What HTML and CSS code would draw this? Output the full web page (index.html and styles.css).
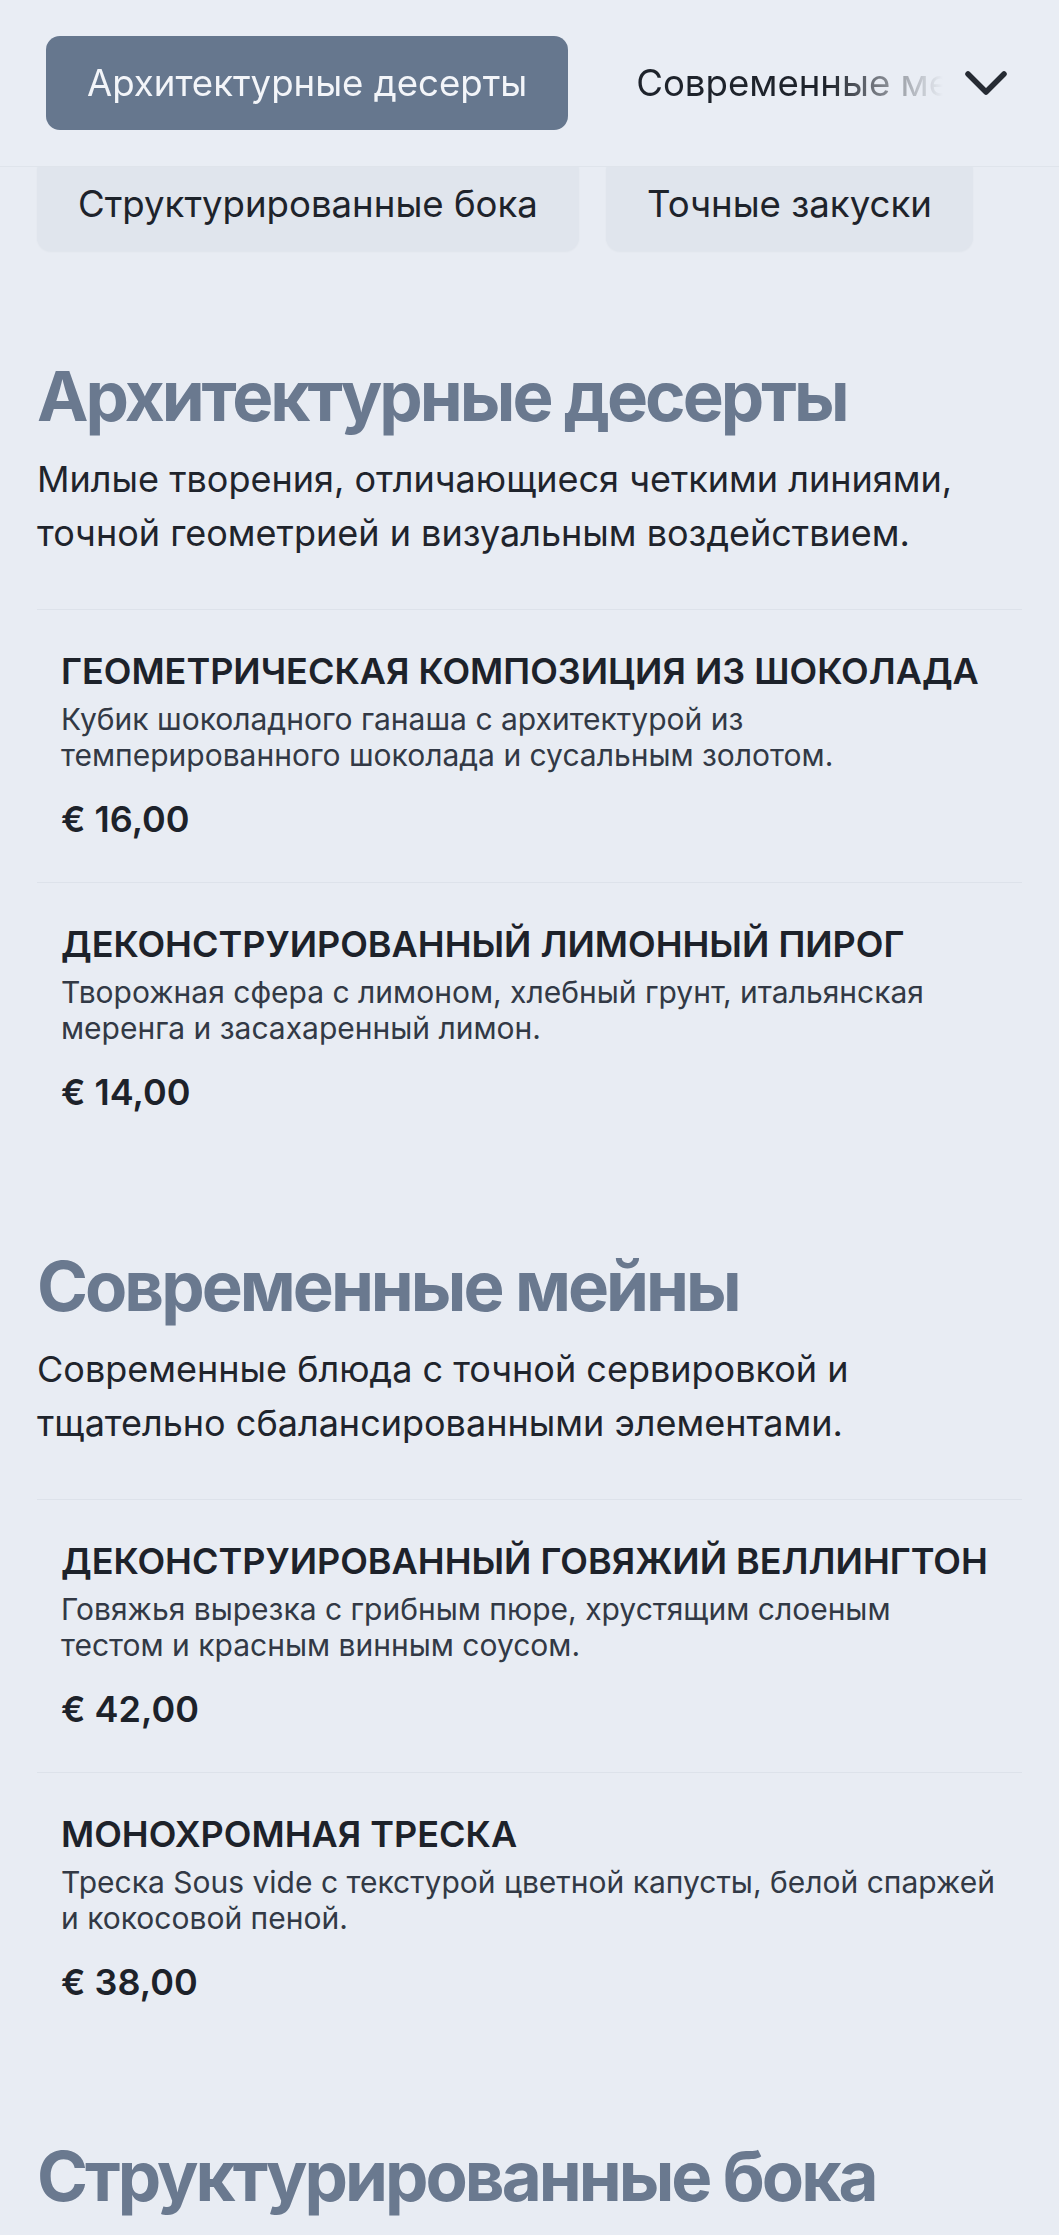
FILE: index.html
```html
<!DOCTYPE html>
<html lang="ru">
<head>
<meta charset="utf-8">
<title>Меню</title>
<link rel="stylesheet" href="styles.css">
</head>
<body>
<header class="topbar">
  <nav class="tabs">
    <a class="tab tab-active" href="#desserts">Архитектурные десерты</a>
    <a class="tab" href="#mains">Современные мейны</a>
    <a class="tab" href="#sides">Структурированные бока</a>
    <a class="tab" href="#starters">Точные закуски</a>
  </nav>
  <button class="toggle" type="button" aria-label="Показать все категории">
    <svg class="chevron" viewBox="0 0 46 28" width="46" height="28"><polyline points="5,5 23,23 41,5" fill="none" stroke="#262b33" stroke-width="5.5" stroke-linecap="round" stroke-linejoin="round"/></svg>
  </button>
</header>
<div class="chips">
  <a class="chip" href="#sides">Структурированные бока</a>
  <a class="chip" href="#starters">Точные закуски</a>
</div>
<main class="menu">
  <section class="category" id="desserts">
    <div class="category-head">
      <h2 class="category-title">Архитектурные десерты</h2>
      <p class="category-desc">Милые творения, отличающиеся четкими линиями, точной геометрией и визуальным воздействием.</p>
    </div>
    <article class="dish">
      <h3 class="dish-name">Геометрическая композиция из шоколада</h3>
      <p class="dish-desc">Кубик шоколадного ганаша с архитектурой из темперированного шоколада и сусальным золотом.</p>
      <p class="dish-price">€ 16,00</p>
    </article>
    <article class="dish">
      <h3 class="dish-name">Деконструированный лимонный пирог</h3>
      <p class="dish-desc">Творожная сфера с лимоном, хлебный грунт, итальянская меренга и засахаренный лимон.</p>
      <p class="dish-price">€ 14,00</p>
    </article>
  </section>
  <section class="category" id="mains">
    <div class="category-head">
      <h2 class="category-title">Современные мейны</h2>
      <p class="category-desc">Современные блюда с точной сервировкой и тщательно сбалансированными элементами.</p>
    </div>
    <article class="dish">
      <h3 class="dish-name">Деконструированный говяжий веллингтон</h3>
      <p class="dish-desc">Говяжья вырезка с грибным пюре, хрустящим слоеным тестом и красным винным соусом.</p>
      <p class="dish-price">€ 42,00</p>
    </article>
    <article class="dish">
      <h3 class="dish-name">Монохромная треска</h3>
      <p class="dish-desc">Треска Sous vide с текстурой цветной капусты, белой спаржей и кокосовой пеной.</p>
      <p class="dish-price">€ 38,00</p>
    </article>
  </section>
  <section class="category" id="sides">
    <div class="category-head">
      <h2 class="category-title">Структурированные бока</h2>
      <p class="category-desc">Гарниры с выверенной текстурой и чистыми формами.</p>
    </div>
  </section>
</main>
</body>
</html>
```
FILE: styles.css
```css
* { box-sizing: border-box; }

html, body {
  margin: 0;
  padding: 0;
}

body {
  background: #e8ecf3;
  color: #1e232b;
  font-family: Inter, "Noto Sans", "Liberation Sans", sans-serif;
}

a { text-decoration: none; color: inherit; }

.topbar {
  position: sticky;
  top: 0;
  z-index: 2;
  display: flex;
  align-items: center;
  height: 167px;
  padding: 0 50px 0 46px;
  background: #e9edf4;
  border-bottom: 1px solid #dfe4eb;
}

.tabs {
  flex: 1;
  display: flex;
  gap: 27px;
  overflow: hidden;
  white-space: nowrap;
  -webkit-mask-image: linear-gradient(90deg, #000 0, #000 calc(100% - 115px), transparent 100%);
  mask-image: linear-gradient(90deg, #000 0, #000 calc(100% - 115px), transparent 100%);
}

.tab {
  flex: none;
  display: flex;
  align-items: center;
  height: 94px;
  padding: 0 41px;
  border-radius: 14px;
  font-size: 36.6px;
  color: #1e232b;
}

.tab-active {
  background: #66778e;
  color: #f3f5f9;
}

.toggle {
  flex: none;
  width: 46px;
  height: 70px;
  margin-left: 20px;
  padding: 0;
  border: 0;
  background: transparent;
  display: flex;
  align-items: center;
  justify-content: center;
}

.chevron { display: block; }

.chips {
  position: relative;
  z-index: 1;
  display: flex;
  gap: 27px;
  margin-top: -10px;
  padding: 0 37px;
}

.chip {
  display: flex;
  align-items: center;
  height: 94px;
  padding: 0 41px;
  border-radius: 14px;
  background: #e0e5ed;
  box-shadow: 0 1px 2px rgba(30, 40, 60, 0.04);
  font-size: 36.6px;
  color: #1e232b;
  white-space: nowrap;
}

.menu {
  padding: 14px 37px 0;
}

.category {
  padding-top: 88px;
}

.category-head {
  margin-bottom: 49px;
}

.category-title {
  margin: 0 0 13px;
  font-size: 69px;
  line-height: 86px;
  font-weight: 700;
  color: #6a798f;
  letter-spacing: -3px;
}

.category-desc {
  margin: 0;
  font-size: 36px;
  line-height: 54px;
  color: #1f242c;
}

.dish {
  border-top: 1px solid #dde2ea;
  padding: 38px 22px 39px 24px;
}

.dish-name {
  margin: 0;
  font-size: 36px;
  line-height: 47px;
  font-weight: 600;
  text-transform: uppercase;
  color: #1d222a;
}

.dish-desc {
  margin: 6px 0 0;
  font-size: 30px;
  line-height: 36px;
  color: #323945;
}

.dish-price {
  margin: 23px 0 0;
  font-size: 36px;
  line-height: 47px;
  font-weight: 600;
  color: #1d222a;
}
```
